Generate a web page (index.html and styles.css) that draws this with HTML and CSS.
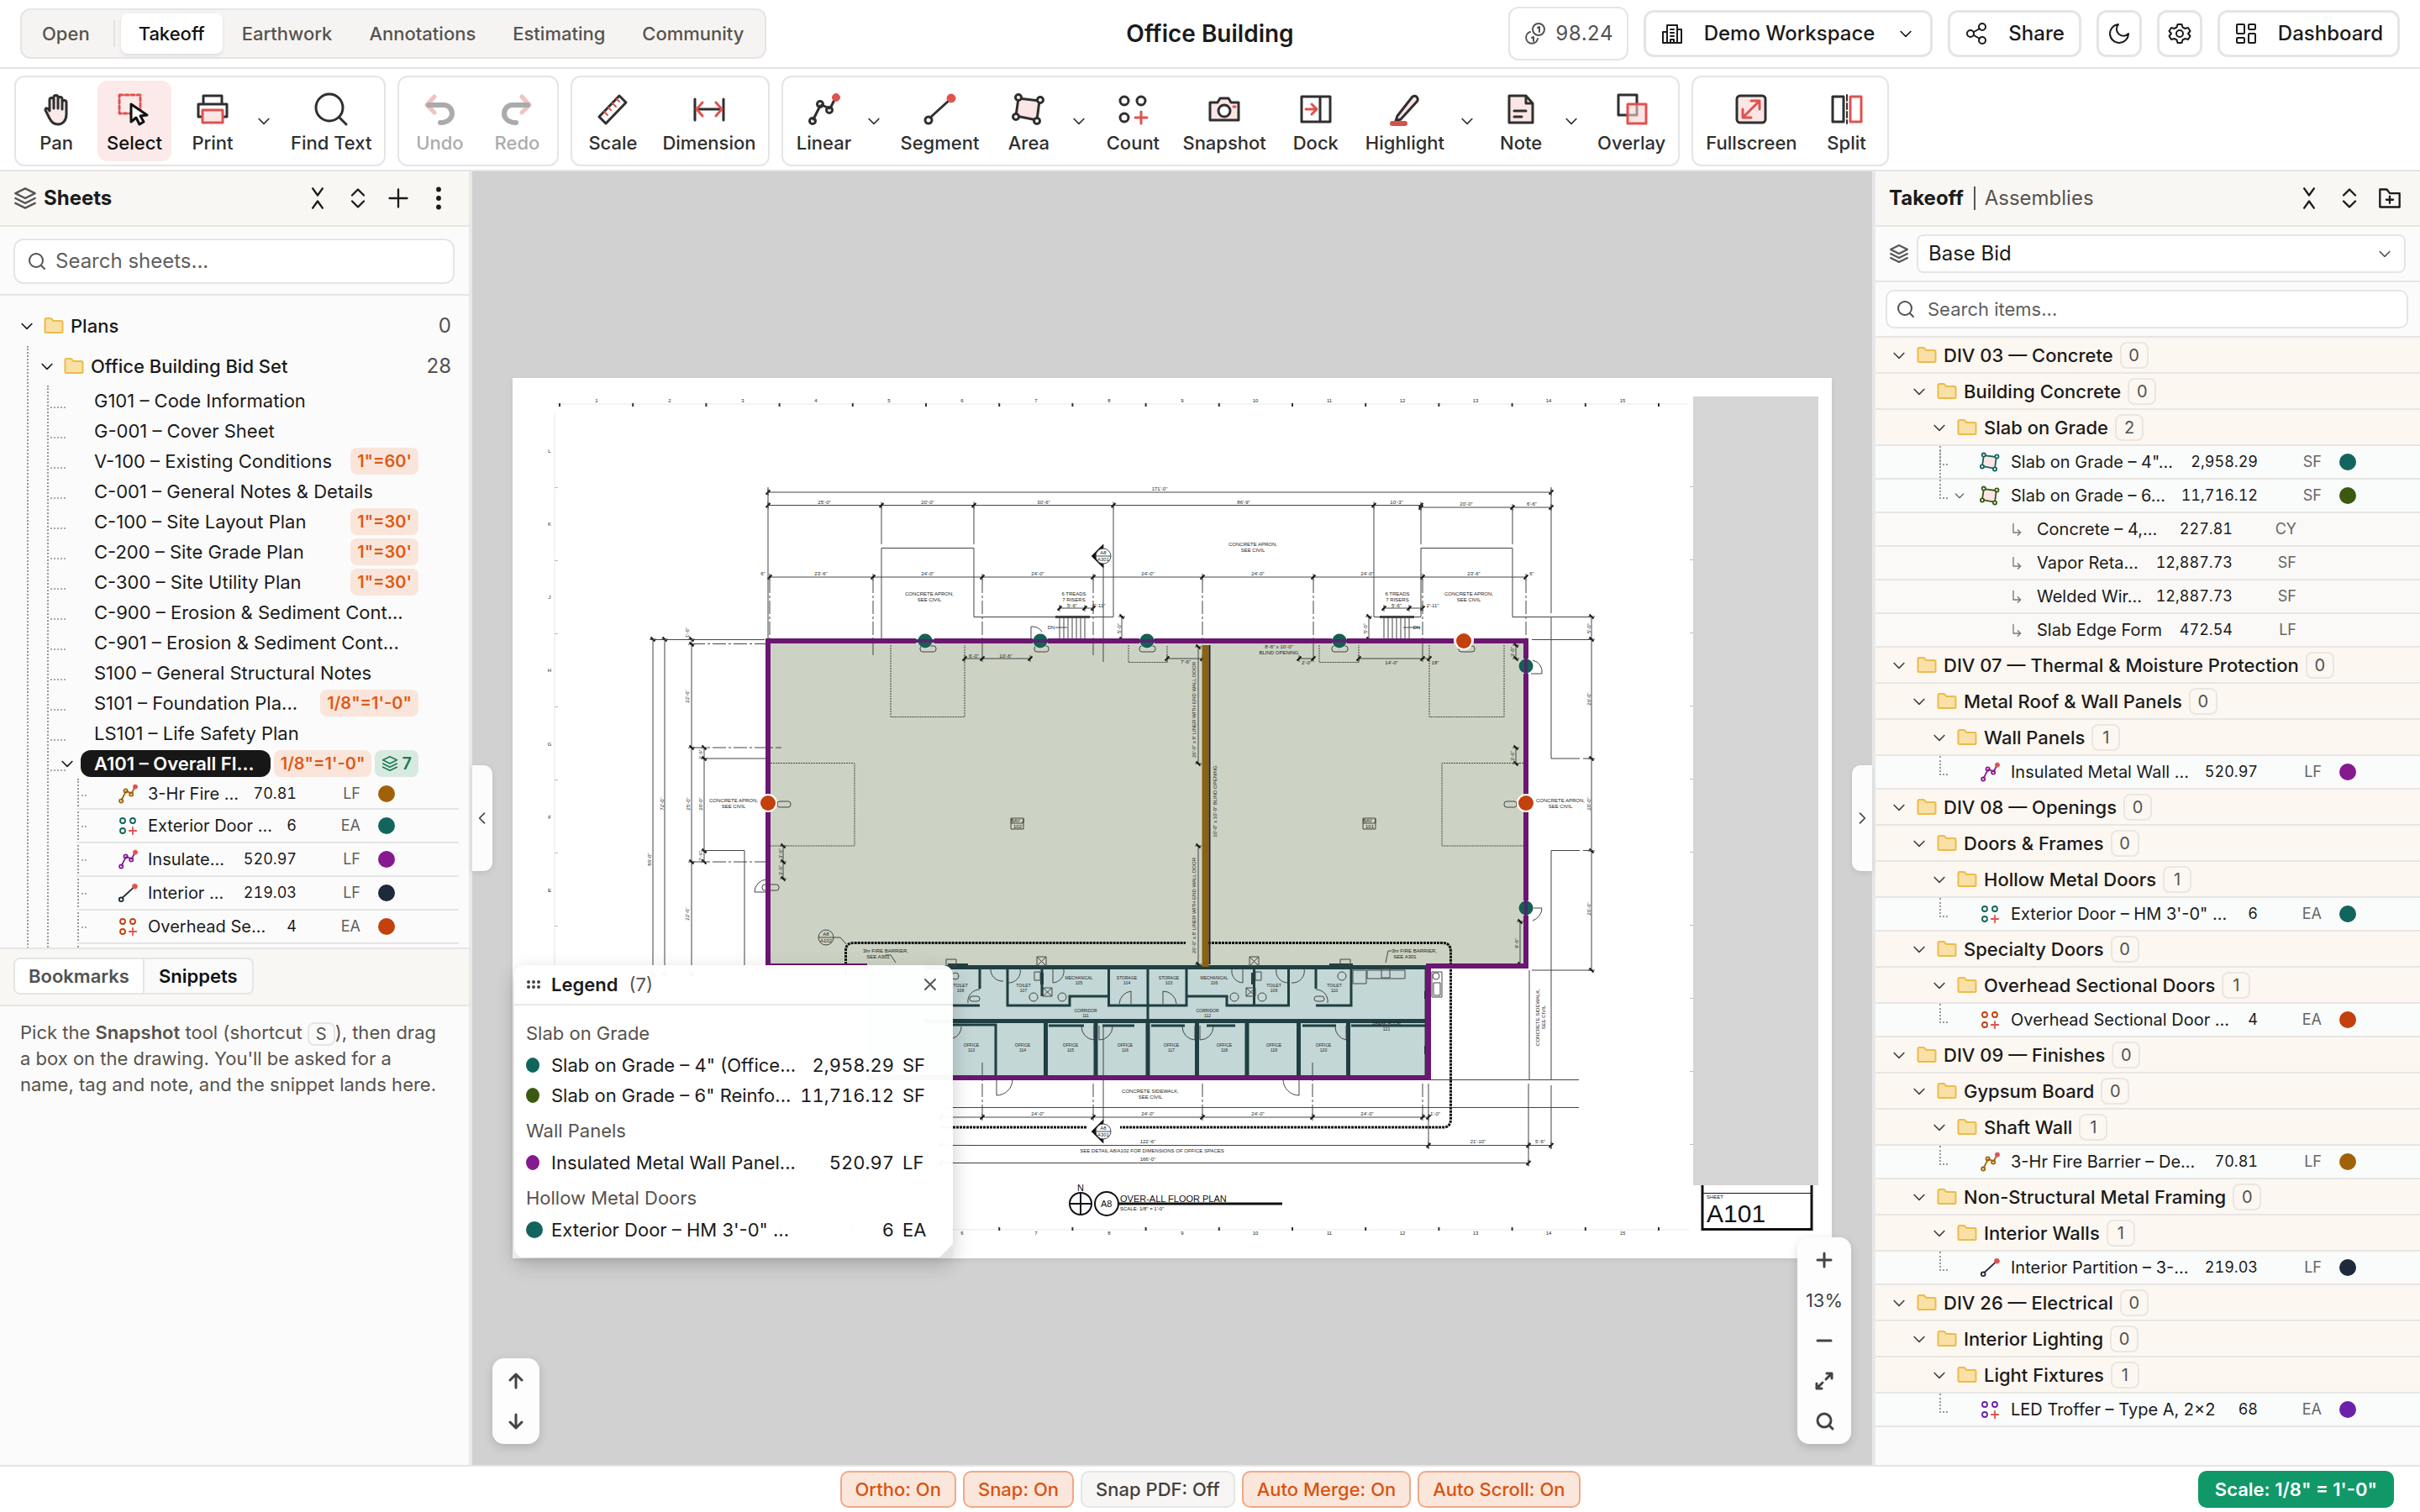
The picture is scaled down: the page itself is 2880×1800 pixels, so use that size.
FILE: index.html
```html
<!DOCTYPE html>
<html lang="en">
<head>
<meta charset="utf-8">
<title>Office Building – Takeoff</title>
<link rel="stylesheet" href="styles.css">
</head>
<body>
<svg class="defs" aria-hidden="true">
  <symbol id="chev" viewBox="0 0 24 24"><path d="m5 9 7 7 7-7"/></symbol>
  <symbol id="left" viewBox="0 0 24 24"><path d="m15 5-7 7 7 7"/></symbol>
  <symbol id="right" viewBox="0 0 24 24"><path d="m9 5 7 7-7 7"/></symbol>
  <symbol id="folder" viewBox="0 0 24 24"><path fill="#f9e0a6" stroke="#ecbb4a" d="M21 20H3a1.500 1.500 0 0 1-1.500-1.500V4.500A1.500 1.500 0 0 1 3 3h5.500l3 3H21a1.500 1.500 0 0 1 1.500 1.500v11A1.500 1.500 0 0 1 21 20Z"/></symbol>
  <symbol id="layers" viewBox="0 0 24 24"><path d="m12 2 10 5-10 5L2 7Z M2 12l10 5 10-5 M2 17l10 5 10-5"/></symbol>
  <symbol id="search" viewBox="0 0 24 24"><circle cx="11" cy="11" r="8"/><path d="m21 21-4-4"/></symbol>
  <symbol id="collapse" viewBox="0 0 24 24"><path d="m7 22 5-7 5 7M7 2l5 7 5-7"/></symbol>
  <symbol id="expand" viewBox="0 0 24 24"><path d="m6 15 6 6 6-6M6 9l6-6 6 6"/></symbol>
  <symbol id="plus" viewBox="0 0 24 24"><path d="M3 12h18M12 3v18"/></symbol>
  <symbol id="dots" viewBox="0 0 24 24"><g fill="currentColor"><circle cx="12" cy="3" r="1.500"/><circle cx="12" cy="12" r="1.500"/><circle cx="12" cy="21" r="1.500"/></g></symbol>
  <symbol id="folderplus" viewBox="0 0 24 24"><path d="M12 10v7M8.500 13.500h7M22 21H2V3h7l3 4h10Z"/></symbol>
  <symbol id="sub" viewBox="0 0 24 24"><path d="M6 2v16h13M14 13l5 5-5 5"/></symbol>
  <symbol id="linear" viewBox="0 0 40 40"><path d="M8 32 16 16M18 15l9 4M29 17l5-10"/><circle cx="7" cy="34" r="3.500"/><circle cx="16" cy="14" r="3.500"/><circle cx="27" cy="21" r="3.500"/><circle cx="35" cy="6" r="4.500" fill="#e0524f" stroke="#e0524f" stroke-width="1"/></symbol>
  <symbol id="segment" viewBox="0 0 40 40"><path d="M9 30 32 9"/><circle cx="7" cy="33" r="4"/><circle cx="34" cy="7" r="5" fill="#e0524f" stroke="#e0524f" stroke-width="1"/></symbol>
  <symbol id="area" viewBox="0 0 40 40"><path fill="#fbe6e5" d="M8 7 33 10 30 33 5 28Z"/><g fill="#fff"><circle cx="8" cy="6" r="3.500"/><circle cx="34" cy="9" r="3.500"/><circle cx="30" cy="34" r="3.500"/><circle cx="5" cy="29" r="3.500"/></g></symbol>
  <symbol id="count" viewBox="0 0 40 40"><circle cx="10" cy="10" r="5"/><circle cx="30" cy="10" r="5"/><circle cx="10" cy="30" r="5"/><path stroke="#e0524f" d="M30 23v14M23 30h14"/></symbol>
</svg>

<header class="topbar">
  <nav class="tabs">
    <button>Open</button><i class="tabsep"></i><button class="on">Takeoff</button><button>Earthwork</button><button>Annotations</button><button>Estimating</button><button>Community</button>
  </nav>
  <h1>Office Building</h1>
  <div class="actions">
    <span class="coins"><svg class="i"><g><circle cx="18" cy="9" r="7"/><path d="M8 12a7 7 0 1 0 9 8M17 7l2-1v6M10 19l2-1v5"/></g></svg>98.24</span>
    <button class="tb"><svg class="i"><path d="M8 25V4h12v21ZM8 12H3v13h5M20 9h5v16h-5M12 9h4M12 13h4M12 17h4M12 25v-4h4v4"/></svg>Demo Workspace<svg class="s"><use href="#chev"/></svg></button>
    <button class="tb"><svg class="i"><circle cx="21" cy="6" r="4"/><circle cx="7" cy="14" r="4"/><circle cx="21" cy="22" r="4"/><path d="m11 16 7 4M18 8l-7 4"/></svg>Share</button>
    <button class="tb sq" aria-label="Dark mode"><svg class="i"><path d="M13 3a8 8 0 0 0 12 11A11 11 0 1 1 13 3Z"/></svg></button>
    <button class="tb sq" aria-label="Settings"><svg class="i"><circle cx="14" cy="14" r="4"/><path d="M11.500 3h5l1 3.500 3 1.500 3.500-1 2.500 4-2.500 3 2.500 3-2.500 4-3.500-1-3 1.500-1 3.500h-5l-1-3.500-3-1.500-3.500 1-2.500-4L4 14l-2.500-3L4 7l3.500 1 3-1.500Z"/></svg></button>
    <button class="tb"><svg class="i"><rect x="3" y="3" width="9" height="11" rx="1"/><rect x="17" y="3" width="8" height="6" rx="1"/><rect x="17" y="14" width="8" height="11" rx="1"/><rect x="3" y="19" width="9" height="6" rx="1"/></svg>Dashboard</button>
  </div>
</header>

<div class="toolbar">
  <div class="group">
    <button><svg class="t"><path fill="#fbeae9" d="M12 22V9a2.500 2.500 0 0 1 5 0v-3a2.500 2.500 0 0 1 5 0v2a2.500 2.500 0 0 1 5 0v4a2.500 2.500 0 0 1 5 0v14c0 7-4 12-10 12-5 0-8-3-10-7l-5-10c0-3 3-3 5 1ZM17 9v10M22 7v12M27 11v9"/></svg>Pan</button>
    <button class="on"><svg class="t"><path stroke="#e0524f" stroke-dasharray="4 3" d="M2 3h25v22H2Z"/><path fill="#fff" d="M16 14v21l6-5 4 8 5-3-4-7 8-1Z"/></svg>Select</button>
    <button><svg class="t"><path d="M9 14V4h22v10M9 29H3V14h34v15h-6"/><path fill="#fbe6e5" stroke="#e0524f" d="M8 21h24v15H8Z"/></svg>Print</button>
    <button class="more" aria-label="Print options"><svg class="s"><use href="#chev"/></svg></button>
    <button><svg class="t"><circle cx="18" cy="18" r="16"/><path d="m30 30 8 8"/></svg>Find Text</button>
  </div>
  <div class="group off">
    <button disabled><svg class="t"><path stroke="#dc6a66" stroke-width="5" d="M14 5 5 15l9 9"/><path stroke-width="6" d="M7 15h18c6 0 10 5 10 10s-4 11-14 11"/></svg>Undo</button>
    <button disabled><svg class="t"><path stroke="#dc6a66" stroke-width="5" d="m26 5 9 10-9 9"/><path stroke-width="6" d="M33 15H15C9 15 5 20 5 25s4 11 14 11"/></svg>Redo</button>
  </div>
  <div class="group">
    <button><svg class="t"><path d="M4 29 28 4l8 8-24 25Z"/><path stroke="#e0524f" stroke-width="2" d="m10 23 4 4M15 18l3 3M20 13l4 4M25 8l3 3"/></svg>Scale</button>
    <button><svg class="t"><path d="M3 8v25M37 8v25M6 20h28"/><path stroke="#e0524f" d="m12 12-7 8 7 8M28 12l7 8-7 8"/></svg>Dimension</button>
  </div>
  <div class="group">
    <button><svg class="t"><use href="#linear"/></svg>Linear</button>
    <button class="more" aria-label="Linear options"><svg class="s"><use href="#chev"/></svg></button>
    <button><svg class="t"><use href="#segment"/></svg>Segment</button>
    <button><svg class="t"><use href="#area"/></svg>Area</button>
    <button class="more" aria-label="Area options"><svg class="s"><use href="#chev"/></svg></button>
    <button><svg class="t"><use href="#count"/></svg>Count</button>
    <button><svg class="t"><path fill="#fbe6e5" d="M3 12h9l3-5h10l3 5h9v21H3Z"/><circle fill="#fff" cx="20" cy="22" r="7"/><path stroke="#e0524f" d="M31 17h2"/></svg>Snapshot</button>
    <button><svg class="t"><path d="M3 5h34v30H3ZM25 5v30"/><path stroke="#e0524f" d="M8 20h12M15 14l6 6-6 6"/></svg>Dock</button>
    <button><svg class="t"><path fill="#fbe6e5" d="M11 28 29 5c4-2 7 1 6 5L15 32l-6 2Z"/><path stroke="#d8504d" stroke-width="6" d="M5 37h15"/></svg>Highlight</button>
    <button class="more" aria-label="Highlight options"><svg class="s"><use href="#chev"/></svg></button>
    <button><svg class="t"><path fill="#fbe6e5" d="M6 4h20l8 9v23H6ZM26 4v9h8M12 22h14M12 29h9"/></svg>Note</button>
    <button class="more" aria-label="Note options"><svg class="s"><use href="#chev"/></svg></button>
    <button><svg class="t"><path d="M4 3h22v24H4Z"/><path fill="#f8d4d2" fill-opacity=".6" stroke="#e0524f" d="M15 14h22v23H15Z"/></svg>Overlay</button>
  </div>
  <div class="group">
    <button><svg class="t"><rect x="3" y="4" width="34" height="32" rx="4" fill="#fbe6e5"/><path stroke="#e0524f" d="M11 29 29 11M20 10h10v10M10 20v10h10"/></svg>Fullscreen</button>
    <button><svg class="t"><path d="M3 5h13v30H3Z"/><path stroke-width="2" stroke-dasharray="7 3" d="M20 3v34"/><path stroke="#e0524f" d="M24 5h13v30H24Z"/></svg>Split</button>
  </div>
</div>

<main class="work">
<aside class="panel sheets">
  <div class="phead"><svg class="i"><use href="#layers"/></svg><h2>Sheets</h2>
    <button aria-label="Collapse all"><svg class="i"><use href="#collapse"/></svg></button><button aria-label="Expand all"><svg class="i"><use href="#expand"/></svg></button><button aria-label="Add"><svg class="i"><use href="#plus"/></svg></button><button aria-label="More"><svg class="i"><use href="#dots"/></svg></button></div>
  <div class="find"><label class="field big"><svg class="i"><use href="#search"/></svg><input type="text" placeholder="Search sheets..." aria-label="Search sheets"></label></div>
  <div class="tree">
    <div class="fold"><svg class="s"><use href="#chev"/></svg><svg class="f"><use href="#folder"/></svg><span>Plans</span><b>0</b></div>
    <div class="kids">
      <div class="fold"><svg class="s"><use href="#chev"/></svg><svg class="f"><use href="#folder"/></svg><span>Office Building Bid Set</span><b>28</b></div>
      <ul class="kids">
        <li><span>G101 – Code Information</span></li>
        <li><span>G-001 – Cover Sheet</span></li>
        <li><span>V-100 – Existing Conditions</span><em>1"=60'</em></li>
        <li><span>C-001 – General Notes &amp; Details</span></li>
        <li><span>C-100 – Site Layout Plan</span><em>1"=30'</em></li>
        <li><span>C-200 – Site Grade Plan</span><em>1"=30'</em></li>
        <li><span>C-300 – Site Utility Plan</span><em>1"=30'</em></li>
        <li><span>C-900 – Erosion &amp; Sediment Cont...</span></li>
        <li><span>C-901 – Erosion &amp; Sediment Cont...</span></li>
        <li><span>S100 – General Structural Notes</span></li>
        <li><span>S101 – Foundation Pla...</span><em>1/8"=1'-0"</em></li>
        <li><span>LS101 – Life Safety Plan</span></li>
        <li class="cur"><svg class="s"><use href="#chev"/></svg><span>A101 – Overall Fl...</span><em>1/8"=1'-0"</em><em class="green"><svg class="s"><use href="#layers"/></svg>7</em></li>
        <li class="sub">
          <ul class="uses">
            <li><svg class="k ochre"><use href="#linear"/></svg><span>3-Hr Fire ...</span><b>70.81</b><small>LF</small><i class="ochre"></i></li>
            <li><svg class="k teal"><use href="#count"/></svg><span>Exterior Door ...</span><b>6</b><small>EA</small><i class="teal"></i></li>
            <li><svg class="k purple"><use href="#linear"/></svg><span>Insulate...</span><b>520.97</b><small>LF</small><i class="purple"></i></li>
            <li><svg class="k navy"><use href="#segment"/></svg><span>Interior ...</span><b>219.03</b><small>LF</small><i class="navy"></i></li>
            <li><svg class="k orange"><use href="#count"/></svg><span>Overhead Se...</span><b>4</b><small>EA</small><i class="orange"></i></li>
          </ul>
        </li>
      </ul>
    </div>
  </div>
  <section class="lower">
    <div class="lhead"><div class="seg"><button>Bookmarks</button><button class="on">Snippets</button></div></div>
    <p>Pick the <strong>Snapshot</strong> tool (shortcut <kbd>S</kbd>), then drag a box on the drawing. You'll be asked for a name, tag and note, and the snippet lands here.</p>
  </section>
</aside>

<section class="canvas">
  <svg class="plan" viewBox="610 450 1570 1048" role="img" aria-label="Overall floor plan">
    <defs>
      <marker id="tk" viewBox="-5 -5 10 10" markerWidth="10" markerHeight="10" markerUnits="userSpaceOnUse" orient="auto"><path d="M0-4V4" stroke="#444" stroke-width="1"/><path d="M-2.500 2.500 2.500-2.500" stroke="#111" stroke-width="1.800"/></marker>
      <g id="mk"><circle r="9" fill="#f6ebe2"/><circle r="8.500" fill="#175e58"/></g>
      <g id="mo"><circle r="11" fill="#fff"/><circle r="9" fill="#c2410c"/></g>
      <g id="bubble"><path fill="#111" d="M0-14-14 0 0 14Z"/><circle r="9" fill="#fff"/><path d="M-9 0H9"/></g>
    </defs>
    <path fill="#fff" d="M610 450h1570v1048H610Z"/>
    <path fill="#d5d5d5" d="M2015 472h149v939h-149Z"/>
    <g stroke="#e8e8e8"><path d="M662 481H2008M1134 1464H2010M660 492V1460"/></g>
    <g stroke="#333" stroke-width="4" fill="none"><path stroke-dasharray="2 85.200" d="M665 482H2010M665 1463H2010"/><path stroke="#bbb" stroke-dasharray="1 86" d="M662 580V1150M2013 579V1410"/></g>
    <g class="tx"><text x="710" y="479">1</text><text x="797" y="479">2</text><text x="884" y="479">3</text><text x="971" y="479">4</text><text x="1058" y="479">5</text><text x="1145" y="479">6</text><text x="1233" y="479">7</text><text x="1320" y="479">8</text><text x="1407" y="479">9</text><text x="1494" y="479">10</text><text x="1582" y="479">11</text><text x="1669" y="479">12</text><text x="1756" y="479">13</text><text x="1843" y="479">14</text><text x="1931" y="479">15</text>
      <text x="1145" y="1470">6</text><text x="1233" y="1470">7</text><text x="1320" y="1470">8</text><text x="1407" y="1470">9</text><text x="1494" y="1470">10</text><text x="1582" y="1470">11</text><text x="1669" y="1470">12</text><text x="1756" y="1470">13</text><text x="1843" y="1470">14</text><text x="1931" y="1470">15</text>
      <text x="654" y="539">L</text><text x="654" y="626">K</text><text x="654" y="713">J</text><text x="654" y="800">H</text><text x="654" y="888">G</text><text x="654" y="975">F</text><text x="654" y="1062">E</text></g>
    <path fill="#ccd3c4" d="M914 763h902v387H914Z"/>
    <path fill="#c3d7d6" d="M1032 1150h668v133h-668Z"/>

    <g class="ln dim">
      <path d="M914 586H1846"/>
      <path d="M914 601.500H1049H1159H1325H1635H1691"/><path d="M1691 604H1800H1846"/>
      <path d="M916 687H1039H1169H1301H1431H1563H1693H1816"/>
      <path d="M777 761V1160"/><path d="M791 761V1160"/><path d="M823 761V767V890V1026V1160"/><path d="M838 890V903V1013V1026"/>
      <path d="M1894 734V761V903V1013V1155"/>
      <path d="M1261 724H1291H1301"/><path d="M1647 724H1677H1693"/><path d="M1335 734V761"/><path d="M1629 734V761"/>
      <path d="M1148 784H1169H1226"/><path d="M1389 784H1431"/><path d="M1546 784H1563"/><path d="M1617 784H1693H1701"/>
      <path d="M1426 770V909"/><path d="M1426 1007V1148"/><path d="M932 1007V1026V1046"/><path d="M1804 768V784"/><path d="M1804 890V909"/><path d="M1809 1097V1148"/>
      <path d="M1120 1330H1169H1301H1431H1562H1693H1700"/><path d="M1120 1363.500H1700H1819H1846"/><path d="M1120 1384.500H1819"/>
    </g>
    <g class="ln">
      <path d="M914 580V760M1049 601V648M1049 760V652.500H1159V734.500H1325V601M1159 601V648"/>
      <path d="M1635 601V734.500H1691M1691 601V648M1691 734V652.500H1800V734.500H1896M1800 604V648M1846 580V730M1846 735V903H1880M1884 903H1896M1846 1090V1012.500H1880M1884 1012.500H1896M1846 1090V1285M1846 1292V1368"/>
      <path d="M774 761.500H910M838 903H912M838 1012.500H886V1150M1823 761.500H1894M1823 1155H1894M1820 1155V1285M1819 1290V1388M1700 1290V1368"/>
      <path stroke-dasharray="16 3 3 3" d="M916 690V764M1039 690V780M1169 690V780M1301 690V780M1431 690V764M1563 690V780M1693 690V780M1816 690V764M823 766.500H914M823 890H930M823 1026H914M1169 1265V1328M1301 1290V1328M1431 1290V1328M1562 1265V1328M1693 1290V1328"/>
      <path stroke-dasharray="2 1" d="M1060 768V853.500H1148V768M917 908.500H1017V1007H917M1701 768V853.500H1790V768M1816 908.500H1716V1007H1816M1343 768V788.500H1389V768M1570 768V788.500H1617V768"/>
      <path d="M1261 734V762M1266 734V762M1271 734V762M1276 734V762M1281 734V762M1286 734V762M1291 734V762M1647 734V762M1652 734V762M1657 734V762M1662 734V762M1667 734V762M1672 734V762M1677 734V762M1256 747h14M1690 747h-20"/>
      <path stroke-width="3" d="M1256 734.500H1297M1642 734.500H1683"/>
      <path d="M898 1062H914M898 1062A15 15 0 0 1 912 1047M1835 802H1822M1835 802A14 14 0 0 0 1824 786M1835 1081H1822M1835 1081A16 16 0 0 1 1824 1096M1227 762V746A14 14 0 0 1 1240 752"/>
      <path d="M1700 1285.500H1879M1120 1318.500H1879M1313 672V788M1313 1220V1336"/>
      <path d="M1186 1285V1304A19 19 0 0 0 1205 1285M1546 1285V1304A19 19 0 0 1 1527 1285M992 1116H1000L1007 1124M1066 1146 1060 1137H1054M1649 1146 1652 1132H1656"/>
      <rect x="1095" y="769" width="19" height="7" rx="3"/><rect x="1231" y="769" width="17" height="7" rx="3"/><rect x="1356" y="769" width="19" height="7" rx="3"/><rect x="1585" y="769" width="19" height="7" rx="3"/><rect x="1736" y="769" width="19" height="7" rx="3"/><rect x="925" y="954" width="16" height="7" rx="3"/><rect x="1790" y="954" width="15" height="7" rx="3"/><rect x="907" y="1053" width="20" height="7" rx="3"/>
      <path d="M1203 974h15v13h-15ZM1203 980h15M1622 974h15v13h-15ZM1622 980h15"/>
      <circle cx="983" cy="1116" r="9"/><path d="M974 1116H992"/>
    </g>
    <g class="tx">
      <text x="1380" y="584">171'-0"</text><text x="981" y="600">25'-0"</text><text x="1104" y="600">20'-0"</text><text x="1242" y="600">30'-6"</text><text x="1480" y="600">86'-9"</text><text x="1662" y="600">10'-3"</text><text x="1745" y="602">20'-0"</text><text x="1823" y="602">6'-6"</text>
      <text x="908" y="685">6"</text><text x="977" y="685">23'-6"</text><text x="1104" y="685">24'-0"</text><text x="1235" y="685">24'-0"</text><text x="1366" y="685">24'-0"</text><text x="1497" y="685">24'-0"</text><text x="1627" y="685">24'-0"</text><text x="1754" y="685">23'-6"</text><text x="1823" y="685">6"</text>
      <text x="1106" y="709">CONCRETE APRON,</text><text x="1106" y="716">SEE CIVIL</text><text x="1491" y="650">CONCRETE APRON,</text><text x="1491" y="657">SEE CIVIL</text><text x="1748" y="709">CONCRETE APRON,</text><text x="1748" y="716">SEE CIVIL</text><text x="873" y="955">CONCRETE APRON,</text><text x="873" y="962">SEE CIVIL</text><text x="1857" y="955">CONCRETE APRON,</text><text x="1857" y="962">SEE CIVIL</text>
      <text x="1278" y="709">6 TREADS</text><text x="1278" y="716">7 RISERS</text><text x="1663" y="709">6 TREADS</text><text x="1663" y="716">7 RISERS</text><text x="1276" y="723">5'-6"</text><text x="1308" y="723">2'-11"</text><text x="1662" y="723">5'-6"</text><text x="1705" y="723">2'-11"</text><text x="1251" y="749">DN</text><text x="1686" y="749">DN</text>
      <text x="1159" y="783">6'-0"</text><text x="1197" y="783">10'-6"</text><text x="1411" y="790">7'-6"</text><text x="1555" y="791">2'-0"</text><text x="1656" y="791">14'-0"</text><text x="1708" y="791">18"</text><text x="1522" y="772">8'-6" x 10'-0"</text><text x="1522" y="779">BLIND OPENING</text>
      <text x="1054" y="1134">3hr FIRE BARRIER,</text><text x="1045" y="1141">SEE A301</text><text x="1683" y="1134">3hr FIRE BARRIER,</text><text x="1672" y="1141">SEE A301</text>
      <text x="1211" y="979">BAY 2</text><text x="1630" y="979">BAY 1</text><text x="1211" y="986">102</text><text x="1630" y="986">101</text>
      <text x="983" y="1114">A8</text><text x="983" y="1122">A102</text>
      <text x="1235" y="1328">24'-0"</text><text x="1366" y="1328">24'-0"</text><text x="1497" y="1328">24'-0"</text><text x="1627" y="1328">24'-0"</text><text x="1708" y="1328">1'-0"</text><text x="1366" y="1361">122'-6"</text><text x="1759" y="1361">21'-10"</text><text x="1833" y="1361">5'-6"</text><text x="1366" y="1382">166'-0"</text><text x="1371" y="1372">SEE DETAIL A8/A102 FOR DIMENSIONS OF OFFICE SPACES</text><text x="1369" y="1301">CONCRETE SIDEWALK,</text><text x="1369" y="1308">SEE CIVIL</text>
      <g transform="rotate(-90)"><text x="-753" y="820">1'-6"</text><text x="-829" y="820">22'-6"</text><text x="-898" y="836">2'-6"</text><text x="-957" y="790">72'-0"</text><text x="-957" y="821">25'-0"</text><text x="-957" y="836">20'-0"</text><text x="-1019" y="836">2'-6"</text><text x="-1023" y="775">86'-0"</text><text x="-1088" y="820">22'-6"</text><text x="-748" y="1334">5'-0"</text><text x="-748" y="1627">5'-0"</text><text x="-748" y="1893">5'-0"</text><text x="-832" y="1893">26'-0"</text><text x="-957" y="1893">20'-0"</text><text x="-1082" y="1893">26'-6"</text><text x="-776" y="1802">3'-0"</text><text x="-900" y="1802">3'-6"</text><text x="-1123" y="1807">9'-6"</text><text x="-1016" y="931">3'-6"</text><text x="-1036" y="931">3'-6"</text><text x="-845" y="1423">26'-6" x 8' LINER WITH END WALL DOOR</text><text x="-1078" y="1423">26'-6" x 8' LINER WITH END WALL DOOR</text><text x="-954" y="1448">10'-0" x 10'-0" BLIND OPENING</text><text x="-1211" y="1832">CONCRETE SIDEWALK,</text><text x="-1211" y="1839">SEE CIVIL</text></g>
    </g>
    <g class="dots"><path d="M1006.500 1160V1131Q1007 1122.500 1016 1122.500H1411M1438 1122.500H1718Q1726 1123 1726.500 1132V1333Q1726 1342 1718 1342H1333M1293 1342H1120"/></g>

    <g class="wall">
      <path stroke-width="5" d="M1100 1151.500H1700"/><path stroke="#8fb0ae" stroke-width="2" stroke-dasharray="14 8" d="M1128 1152H1696"/>
      <path stroke-width="3" d="M1166 1153V1177M1199 1153V1197H1273V1186H1319M1240 1153V1186M1319.500 1153V1197H1412V1153M1366 1153V1216M1412 1186H1460V1197H1533.500V1153M1492.500 1153V1197M1566 1153V1177M1566 1197H1608V1153M1134 1197H1166M1697 1153V1280"/>
      <path stroke="#12394a" stroke-width="5" d="M1100 1215.500H1700M1244.500 1216V1280M1304 1216V1280M1366 1216V1280M1424.500 1216V1280M1484 1216V1280M1545.500 1216V1280M1604.500 1216V1280"/>
      <path stroke-width="3" d="M1134 1220H1185V1280M1248 1221H1290M1312 1221H1350M1370 1221H1410M1436 1221H1470M1550 1221H1590M1608 1221H1696"/>
      <path stroke="#111" stroke-width="4" d="M1128 1149H1152M1582 1149H1610M1697 1180V1189M1697 1245V1255M1240 1158V1172M1491 1158V1172"/>
    </g>
    <g class="ln">
      <path d="M1179 1153A14 14 0 0 0 1194 1168M1214 1153A14 14 0 0 1 1199 1170M1253 1153V1170A14 14 0 0 0 1266 1154M1479 1153V1170A14 14 0 0 1 1466 1154M1519 1153A14 14 0 0 0 1533 1170M1552 1153A14 14 0 0 1 1537 1170M1346 1195V1180A16 16 0 0 0 1332 1195M1384 1195V1180A16 16 0 0 1 1400 1195M1152 1194A14 14 0 0 1 1166 1178M1580 1194A14 14 0 0 0 1566 1178M1302 1221V1238A16 16 0 0 1 1287 1222M1308 1221V1238A16 16 0 0 0 1324 1222M1422 1221V1238A16 16 0 0 1 1407 1222M1428 1221V1238A16 16 0 0 0 1444 1222M1602 1221V1238A16 16 0 0 1 1589 1222M1134 1236A14 14 0 0 0 1144 1222"/>
      <path d="M1234 1139h11v11h-11ZM1234 1139l11 11M1245 1139l-11 11M1487 1139h11v11h-11ZM1487 1139l11 11M1498 1139l-11 11M1126 1142h12v8h-12ZM1595 1142h12v8h-12ZM1241 1176h11v10h-11ZM1241 1176l11 10M1252 1176l-11 10M1483 1176h11v10h-11ZM1483 1176l11 10M1494 1176l-11 10M1610 1155h16v16h-16ZM1627 1155h45v10h-45ZM1644 1153h10v11h-10ZM1704 1157h12v30h-12ZM1706 1170h8v15h-8ZM1231 1157h7v10h-7ZM1494 1157h7v10h-7Z"/>
      <circle cx="1230" cy="1187" r="5"/><circle cx="1264" cy="1187" r="5"/><circle cx="1469" cy="1187" r="5"/><circle cx="1502" cy="1187" r="5"/><circle cx="1597" cy="1162" r="5"/><circle cx="1137" cy="1162" r="4"/><circle cx="1709" cy="1162" r="4"/>
      <rect x="1154" y="1186" width="12" height="6" rx="3"/><rect x="1564" y="1186" width="12" height="6" rx="3"/>
    </g>
    <g class="tx rm">
      <text x="1143" y="1175">TOILET</text><text x="1143" y="1181">108</text><text x="1218" y="1175">TOILET</text><text x="1218" y="1181">107</text><text x="1284" y="1166">MECHANICAL</text><text x="1284" y="1172">105</text><text x="1341" y="1166">STORAGE</text><text x="1341" y="1172">104</text><text x="1391" y="1166">STORAGE</text><text x="1391" y="1172">103</text><text x="1445" y="1166">MECHANICAL</text><text x="1445" y="1172">106</text><text x="1516" y="1175">TOILET</text><text x="1516" y="1181">109</text><text x="1588" y="1175">TOILET</text><text x="1588" y="1181">110</text>
      <text x="1292" y="1205">CORRIDOR</text><text x="1292" y="1211">111</text><text x="1437" y="1205">CORRIDOR</text><text x="1437" y="1211">112</text><text x="1650" y="1220">BREAK ROOM</text><text x="1650" y="1227">121</text>
      <text x="1156" y="1246">OFFICE</text><text x="1156" y="1252">113</text><text x="1217" y="1246">OFFICE</text><text x="1217" y="1252">114</text><text x="1274" y="1246">OFFICE</text><text x="1274" y="1252">115</text><text x="1339" y="1246">OFFICE</text><text x="1339" y="1252">116</text><text x="1394" y="1246">OFFICE</text><text x="1394" y="1252">117</text><text x="1457" y="1246">OFFICE</text><text x="1457" y="1252">118</text><text x="1516" y="1246">OFFICE</text><text x="1516" y="1252">119</text><text x="1575" y="1246">OFFICE</text><text x="1575" y="1252">120</text>
    </g>

    <path stroke="#8a6214" stroke-width="8" d="M1434.500 768V1151"/><path stroke="#222" stroke-width="2" d="M1439.500 768V1148"/>
    <use href="#mk" x="1101" y="763"/><use href="#mk" x="1238" y="763"/><use href="#mk" x="1365" y="763"/><use href="#mk" x="1594" y="763"/><use href="#mo" x="1742" y="763"/><use href="#mk" x="1816" y="793"/><use href="#mk" x="1816" y="1081"/>
    <path fill="none" stroke="#6b1670" stroke-width="6" d="M1032 1150H914V763H1090M1112 763H1229M1247 763H1356M1374 763H1585M1603 763H1730M1754 763H1816V784M1816 802V1072M1816 1090V1150H1700V1283H1032"/>
    <path stroke="#4d2a68" stroke-width="4" d="M1090 763h22M1229 763h18M1356 763h18M1585 763h18M1816 784v18M1816 1072v18"/>
    <use href="#mo" x="914" y="956"/><use href="#mo" x="1816" y="956"/>
    <g class="ln"><use href="#bubble" x="1313" y="662"/><use href="#bubble" x="1313" y="1347"/></g>
    <g class="tx"><text x="1313" y="660">A8</text><text x="1313" y="668">A301</text><text x="1313" y="1345">A8</text><text x="1313" y="1353">A301</text></g>

    <g fill="none" stroke="#111"><circle cx="1286" cy="1433" r="13" stroke-width="2"/><path stroke-width="2" d="M1273 1433H1299M1286 1420V1446"/><circle cx="1317" cy="1433" r="14" stroke-width="2"/><path stroke-width="3" d="M1331 1433H1526"/><path stroke-width="3" d="M2026 1411V1463.500H2156V1411"/><path d="M2026 1420.500H2156"/></g>
    <g class="tt"><text x="1282" y="1418">N</text><text x="1310" y="1437">A8</text><text x="1333" y="1431">OVER-ALL FLOOR PLAN</text><text class="sm" x="1333" y="1441">SCALE: 1/8" = 1'-0"</text><text class="sm" x="2031" y="1427">SHEET</text><text class="no" x="2031" y="1455">A101</text></g>
  </svg>

  <div class="legend">
    <header><svg class="grip"><g fill="#444"><circle cx="2" cy="3" r="2"/><circle cx="8" cy="3" r="2"/><circle cx="14" cy="3" r="2"/><circle cx="2" cy="9" r="2"/><circle cx="8" cy="9" r="2"/><circle cx="14" cy="9" r="2"/></g></svg><h3>Legend</h3><span>(7)</span><button aria-label="Close legend"><svg class="x"><path d="m2 2 12 12M14 2 2 14"/></svg></button></header>
    <div class="lbody">
      <h4>Slab on Grade</h4>
      <p><i class="teal"></i><span>Slab on Grade – 4" (Office...</span><b>2,958.29</b><u>SF</u></p>
      <p><i class="olive"></i><span>Slab on Grade – 6" Reinfo...</span><b>11,716.12</b><u>SF</u></p>
      <h4>Wall Panels</h4>
      <p><i class="purple"></i><span>Insulated Metal Wall Panel...</span><b>520.97</b><u>LF</u></p>
      <h4>Hollow Metal Doors</h4>
      <p><i class="teal pt"></i><span>Exterior Door – HM 3'-0" ...</span><b>6</b><u>EA</u></p>
    </div>
    <svg class="corner"><path fill="#e3e3e3" d="M16 0v16H0Z"/></svg>
  </div>
  <button class="handle lh" aria-label="Hide sheets"><svg class="s"><use href="#left"/></svg></button>
  <button class="handle rh" aria-label="Hide takeoff"><svg class="s"><use href="#right"/></svg></button>
  <div class="float nav"><button aria-label="Previous sheet"><svg class="i"><path d="M14 22V6M7 13l7-7 7 7"/></svg></button><button aria-label="Next sheet"><svg class="i"><path d="M14 6v16M7 15l7 7 7-7"/></svg></button></div>
  <div class="float zoom"><button aria-label="Zoom in"><svg class="i"><path d="M6 14h16M14 6v16"/></svg></button><span>13%</span><button aria-label="Zoom out"><svg class="i"><path d="M6 14h16"/></svg></button><button aria-label="Fit"><svg class="i"><path d="M16 12l7-7M17 5h6v6M12 16l-7 7M5 17v6h6"/></svg></button><button aria-label="Find"><svg class="i"><circle cx="14" cy="13" r="8"/><path d="m20 19 4 4"/></svg></button></div>
</section>

<aside class="panel takeoff">
  <div class="phead"><h2>Takeoff</h2><i class="bar"></i><a href="#assemblies">Assemblies</a>
    <button aria-label="Collapse all"><svg class="i"><use href="#collapse"/></svg></button><button aria-label="Expand all"><svg class="i"><use href="#expand"/></svg></button><button aria-label="New folder"><svg class="i"><use href="#folderplus"/></svg></button></div>
  <div class="bid"><svg class="i"><use href="#layers"/></svg><div class="sel"><select aria-label="Bid"><option>Base Bid</option></select><svg class="s"><use href="#chev"/></svg></div></div>
  <div class="find2"><label class="field"><svg class="i"><use href="#search"/></svg><input type="text" placeholder="Search items..." aria-label="Search items"></label></div>
  <ul class="items">
    <li class="g"><svg class="s"><use href="#chev"/></svg><svg class="f"><use href="#folder"/></svg><span>DIV 03 — Concrete</span><b>0</b></li>
    <li class="g l1"><svg class="s"><use href="#chev"/></svg><svg class="f"><use href="#folder"/></svg><span>Building Concrete</span><b>0</b></li>
    <li class="g l2"><svg class="s"><use href="#chev"/></svg><svg class="f"><use href="#folder"/></svg><span>Slab on Grade</span><b>2</b></li>
    <li class="it thru"><svg class="k teal"><use href="#area"/></svg><span>Slab on Grade – 4"...</span><b>2,958.29</b><small>SF</small><i class="teal"></i></li>
    <li class="it op"><svg class="s"><use href="#chev"/></svg><svg class="k olive"><use href="#area"/></svg><span>Slab on Grade – 6...</span><b>11,716.12</b><small>SF</small><i class="olive"></i></li>
    <li class="su"><svg class="s"><use href="#sub"/></svg><span>Concrete – 4,...</span><b>227.81</b><small>CY</small></li>
    <li class="su"><svg class="s"><use href="#sub"/></svg><span>Vapor Reta...</span><b>12,887.73</b><small>SF</small></li>
    <li class="su"><svg class="s"><use href="#sub"/></svg><span>Welded Wir...</span><b>12,887.73</b><small>SF</small></li>
    <li class="su"><svg class="s"><use href="#sub"/></svg><span>Slab Edge Form</span><b>472.54</b><small>LF</small></li>
    <li class="g"><svg class="s"><use href="#chev"/></svg><svg class="f"><use href="#folder"/></svg><span>DIV 07 — Thermal &amp; Moisture Protection</span><b>0</b></li>
    <li class="g l1"><svg class="s"><use href="#chev"/></svg><svg class="f"><use href="#folder"/></svg><span>Metal Roof &amp; Wall Panels</span><b>0</b></li>
    <li class="g l2"><svg class="s"><use href="#chev"/></svg><svg class="f"><use href="#folder"/></svg><span>Wall Panels</span><b>1</b></li>
    <li class="it"><svg class="k purple"><use href="#linear"/></svg><span>Insulated Metal Wall ...</span><b>520.97</b><small>LF</small><i class="purple"></i></li>
    <li class="g"><svg class="s"><use href="#chev"/></svg><svg class="f"><use href="#folder"/></svg><span>DIV 08 — Openings</span><b>0</b></li>
    <li class="g l1"><svg class="s"><use href="#chev"/></svg><svg class="f"><use href="#folder"/></svg><span>Doors &amp; Frames</span><b>0</b></li>
    <li class="g l2"><svg class="s"><use href="#chev"/></svg><svg class="f"><use href="#folder"/></svg><span>Hollow Metal Doors</span><b>1</b></li>
    <li class="it"><svg class="k teal"><use href="#count"/></svg><span>Exterior Door – HM 3'-0" ...</span><b>6</b><small>EA</small><i class="teal"></i></li>
    <li class="g l1"><svg class="s"><use href="#chev"/></svg><svg class="f"><use href="#folder"/></svg><span>Specialty Doors</span><b>0</b></li>
    <li class="g l2"><svg class="s"><use href="#chev"/></svg><svg class="f"><use href="#folder"/></svg><span>Overhead Sectional Doors</span><b>1</b></li>
    <li class="it"><svg class="k orange"><use href="#count"/></svg><span>Overhead Sectional Door ...</span><b>4</b><small>EA</small><i class="orange"></i></li>
    <li class="g"><svg class="s"><use href="#chev"/></svg><svg class="f"><use href="#folder"/></svg><span>DIV 09 — Finishes</span><b>0</b></li>
    <li class="g l1"><svg class="s"><use href="#chev"/></svg><svg class="f"><use href="#folder"/></svg><span>Gypsum Board</span><b>0</b></li>
    <li class="g l2"><svg class="s"><use href="#chev"/></svg><svg class="f"><use href="#folder"/></svg><span>Shaft Wall</span><b>1</b></li>
    <li class="it"><svg class="k ochre"><use href="#linear"/></svg><span>3-Hr Fire Barrier – De...</span><b>70.81</b><small>LF</small><i class="ochre"></i></li>
    <li class="g l1"><svg class="s"><use href="#chev"/></svg><svg class="f"><use href="#folder"/></svg><span>Non-Structural Metal Framing</span><b>0</b></li>
    <li class="g l2"><svg class="s"><use href="#chev"/></svg><svg class="f"><use href="#folder"/></svg><span>Interior Walls</span><b>1</b></li>
    <li class="it"><svg class="k navy"><use href="#segment"/></svg><span>Interior Partition – 3-...</span><b>219.03</b><small>LF</small><i class="navy"></i></li>
    <li class="g"><svg class="s"><use href="#chev"/></svg><svg class="f"><use href="#folder"/></svg><span>DIV 26 — Electrical</span><b>0</b></li>
    <li class="g l1"><svg class="s"><use href="#chev"/></svg><svg class="f"><use href="#folder"/></svg><span>Interior Lighting</span><b>0</b></li>
    <li class="g l2"><svg class="s"><use href="#chev"/></svg><svg class="f"><use href="#folder"/></svg><span>Light Fixtures</span><b>1</b></li>
    <li class="it"><svg class="k violet"><use href="#count"/></svg><span>LED Troffer – Type A, 2×2</span><b>68</b><small>EA</small><i class="violet"></i></li>
  </ul>
</aside>
</main>

<footer class="status">
  <div class="toggles"><button class="on">Ortho: On</button><button class="on">Snap: On</button><button>Snap PDF: Off</button><button class="on">Auto Merge: On</button><button class="on">Auto Scroll: On</button></div>
  <button class="scale">Scale: 1/8" = 1'-0"</button>
</footer>
</body>
</html>
```
FILE: styles.css
```css
* { box-sizing: border-box; }
body {
  margin: 0;
  height: 100vh;
  display: grid;
  grid-template-rows: auto auto minmax(0, 1fr) auto;
  font: 22px/28px Inter, "Liberation Sans", sans-serif;
  color: #1b1b1b;
  background: #fff;
  overflow: hidden;
}
h1, h2, h3, h4, p, ul { margin: 0; padding: 0; }
ul { list-style: none; }
button, input, select { font: inherit; color: inherit; background: none; border: 0; padding: 0; margin: 0; }
b, em, i, u, small { font-style: normal; font-weight: 400; text-decoration: none; font-size: inherit; }
svg { flex: none; fill: none; stroke: currentColor; stroke-width: 2; stroke-linecap: round; stroke-linejoin: round; }
.defs { position: absolute; width: 0; height: 0; }
.i { width: 28px; height: 28px; }
.s { width: 20px; height: 20px; }
.f { width: 24px; height: 24px; }
.k { width: 24px; height: 24px; stroke-width: 3; }

.teal { color: #12655d; }
.olive { color: #3a5a12; }
.purple { color: #86198f; }
.ochre { color: #a16207; }
.navy { color: #1e293b; }
.orange { color: #c2410c; }
.violet { color: #6b21a8; }
i.teal, i.olive, i.purple, i.ochre, i.navy, i.orange, i.violet {
  width: 20px; height: 20px; border-radius: 50%; background: currentColor; flex: none;
}

/* top bar */
.topbar {
  display: grid;
  grid-template-columns: 1fr auto 1fr;
  align-items: center;
  height: 82px;
  padding: 0 24px;
  border-bottom: 2px solid #e5e5e5;
}
.tabs {
  justify-self: start;
  display: flex;
  align-items: center;
  gap: 2px;
  padding: 4px;
  border: 2px solid #e7e5e4;
  border-radius: 12px;
  background: #f6f4f2;
  font-weight: 500;
  color: #57534e;
}
.tabs button { height: 48px; padding: 0 21px; border-radius: 8px; }
.tabs button:first-child { padding-left: 20px; }
.tabs .on { background: #fff; color: #111; box-shadow: 0 2px 4px rgba(0, 0, 0, .1); }
.tabsep { width: 2px; height: 32px; margin: 0 5px; background: #e5e3e1; }
.topbar h1 { font-size: 28px; line-height: 34px; font-weight: 600; }
.actions { justify-self: end; display: flex; align-items: center; gap: 18px; font-size: 24px; }
.coins { display: flex; align-items: center; gap: 10px; height: 64px; padding: 0 16px; border: 2px solid #e5e5e5; border-radius: 12px; color: #525252; font-variant-numeric: tabular-nums; }
.tb { display: flex; align-items: center; gap: 24px; height: 56px; padding: 0 17px; border: 3px solid #e5e5e5; border-radius: 12px; font-weight: 500; }
.tb .s { margin: 0 2px 0 3px; }
.sq { width: 54px; padding: 0; justify-content: center; }

/* toolbar */
.toolbar { display: flex; gap: 14px; height: 122px; padding: 8px 17px 4px; border-bottom: 2px solid #e5e5e5; align-items: flex-start; }
.group { display: flex; gap: 4px; height: 108px; padding: 4px; border: 2px solid #e5e5e5; border-radius: 12px; }
.group button { display: flex; flex-direction: column; align-items: center; gap: 6px; min-width: 88px; height: 96px; padding: 14px 11px 8px; border-radius: 12px; font-weight: 500; color: #2f2f2f; }
.group .on { background: #fbeae9; color: #111; }
.group .more { min-width: 32px; width: 32px; padding: 38px 0 0; margin-left: -4px; }
.group:first-child { gap: 5px; }
.t { width: 40px; height: 40px; stroke-width: 3; overflow: visible; }
.off button { opacity: .4; }

/* main area */
.work { display: grid; grid-template-columns: 562px minmax(0, 1fr) 652px; min-height: 0; }
.panel { display: flex; flex-direction: column; min-height: 0; background: #fbfbfb; }
.sheets { border-right: 4px solid #e8e8e8; }
.takeoff { border-left: 4px solid #e8e8e8; }
.phead { display: flex; align-items: center; height: 66px; padding: 0 16px; background: #f9f7f4; border-bottom: 2px solid #e9e5e0; }
.phead .i { width: 28px; height: 28px; }
.phead h2 { margin-left: 8px; font-size: 24px; font-weight: 700; margin-right: auto; }
.phead button { display: flex; width: 48px; justify-content: center; }
.sheets .phead { padding-right: 12px; }
.sheets .phead > .i { color: #555; }
.takeoff .phead { padding: 0 12px 0 8px; font-size: 24px; }
.takeoff .phead h2 { margin-right: 12px; }
.bar { width: 2px; height: 28px; background: #555; margin-right: 11px; }
.phead a { color: #57534e; text-decoration: none; margin-right: auto; }
.find { padding: 14px 17px 12px 16px; border-bottom: 2px solid #e5e5e5; }
.field { display: flex; align-items: center; gap: 14px; height: 46px; padding: 0 10px; background: #fff; border: 2px solid #e5e5e5; border-radius: 10px; color: #525252; }
.field .i { width: 24px; height: 24px; }
.field input { flex: 1; min-width: 0; outline: 0; }
.field input::placeholder { color: #5f5f5f; opacity: 1; }
.field.big { height: 54px; gap: 10px; font-size: 24px; padding: 0 14px; border-radius: 12px; }

.tree { flex: 1; min-height: 0; overflow: hidden; padding-top: 12px; }
.fold { display: flex; align-items: center; gap: 10px; height: 48px; padding: 0 21px 0 22px; font-weight: 500; }
.fold b { margin-left: auto; font-size: 24px; color: #525252; }
.fold span { margin-left: -2px; }
.tree .kids { margin-left: 32px; border-left: 2px dotted #999; }
.tree .kids .fold { height: 47px; padding-left: 12px; }
.tree .kids .kids { margin-left: 22px; }
.kids li { position: relative; display: flex; align-items: center; gap: 4px; height: 36px; padding: 0 60px 0 54px; }
.kids li::before { content: ""; position: absolute; left: 2px; top: 25px; width: 18px; border-top: 2px dotted #aaa; }
.kids li span { margin-right: auto; }
.kids em { display: flex; align-items: center; gap: 4px; height: 32px; padding: 0 8px; border-radius: 8px; background: #fae5db; color: #dd5a17; font-size: 20px; font-weight: 600; }
.kids em.green { background: #d8eae0; color: #1f7a55; }
.kids .cur { padding-left: 12px; }
.kids .cur span { flex: 1; height: 32px; line-height: 32px; padding: 0 16px; margin: 0 0 0 2px; border-radius: 12px; background: #171717; color: #fff; font-weight: 600; white-space: nowrap; }
.kids .sub { display: block; height: auto; padding: 0; }
.kids .sub::before { content: none; }
.uses { margin-left: 34px; padding-bottom: 40px; border-left: 2px dotted #999; }
.kids .uses li { height: 40px; padding: 0 76px 0 49px; margin: 0 12px 0 -3px; gap: 0; font-size: 20px; border-bottom: 2px solid #e5e5e5; }
.kids .uses li:first-child { height: 37px; }
.kids .uses li::before { top: 19px; width: 6px; left: 6px; }
.uses span { margin-left: 12px; }
.uses b, .items .it b, .items .su b { font-size: 18px; font-variant-numeric: tabular-nums; }
.uses small { width: 76px; text-align: right; font-size: 18px; color: #5f5f5f; }
.uses i { margin-left: 21px; }

.lower { flex: 0 0 40%; border-top: 2px solid #e5e5e5; }
.lhead { padding: 10px 16px; height: 68px; background: #f9f7f4; border-bottom: 2px solid #e9e5e0; }
.seg { display: inline-flex; border: 2px solid #e5e5e5; border-radius: 8px; overflow: hidden; font-weight: 600; }
.seg button { height: 40px; padding: 0 16px; background: #fff; color: #525252; }
.seg .on { padding: 0 17px; background: #fafafa; color: #111; border-left: 2px solid #e5e5e5; }
.lower p { padding: 16px 24px; line-height: 31px; color: #57534e; }
.lower strong { font-weight: 600; }
kbd { display: inline-block; font: inherit; font-size: 20px; line-height: 24px; vertical-align: bottom; border: 2px solid #e5e5e5; border-radius: 8px; padding: 0 8px; }

/* drawing area */
.canvas { position: relative; display: flex; align-items: center; justify-content: center; background: #d1d1d1; min-width: 0; }
.plan { width: calc(100% - 96px); aspect-ratio: 1570 / 1048; stroke: none; stroke-linecap: butt; stroke-linejoin: miter; stroke-width: 1; box-shadow: 0 2px 6px rgba(0, 0, 0, .08); }
.ln { fill: none; stroke: #444; stroke-width: 1; }
.dim path { marker: url(#tk); stroke: #444; }
.dots path { fill: none; stroke: #111; stroke-width: 3; stroke-dasharray: 3 1; }
.wall path { fill: none; stroke: #1f3f42; }
.plan .tx { font: 6px "Liberation Sans", Arial, sans-serif; fill: #222; text-anchor: middle; }
.plan .rm { font-size: 5px; }
.tt { font: 11px "Liberation Sans", Arial, sans-serif; fill: #111; }
.tt .sm { font-size: 6px; }
.tt .no { font-size: 30px; }

.legend { position: absolute; left: 50px; bottom: 247px; width: 522px; background: rgba(255, 255, 255, .97); border-radius: 12px; box-shadow: 0 8px 24px rgba(0, 0, 0, .2); }
.legend header { display: flex; align-items: center; height: 48px; padding: 0 18px 0 15px; border-bottom: 2px solid #e8e8e8; }
.grip { width: 16px; height: 12px; stroke: none; }
.legend h3 { margin: 0 13px; font-size: 22px; font-weight: 600; }
.legend header span { color: #57534e; }
.legend header button { display: flex; margin-left: auto; padding-right: 1px; color: #555; }
.x { width: 16px; height: 16px; }
.lbody { padding: 15px 16px 16px 14px; }
.legend h4 { font-weight: 400; font-size: 22px; line-height: 36px; margin: 6px 0 2px; color: #57534e; }
.legend h4:first-child { margin-top: 0; }
.legend p { display: flex; align-items: center; height: 36px; }
.legend p:last-child { height: 35px; }
.legend i { width: 16px; height: 18px; margin-right: 14px; }
.legend i.pt { width: 20px; height: 20px; margin-right: 10px; }
.legend b { margin-left: auto; font-variant-numeric: tabular-nums; }
.legend u { width: 44px; margin-left: 10px; }
.corner { position: absolute; right: 0; bottom: 0; width: 16px; height: 16px; stroke: none; }

.handle { position: absolute; top: 707px; width: 24px; height: 126px; background: #fcfcfc; display: flex; align-items: center; justify-content: center; color: #444; box-shadow: 0 2px 6px rgba(0, 0, 0, .1); }
.lh { left: 0; border-radius: 0 10px 10px 0; }
.rh { right: 0; border-radius: 10px 0 0 10px; }
.float { position: absolute; bottom: 25px; display: flex; flex-direction: column; padding: 3px 0; align-items: center; background: #fdfdfd; border-radius: 14px; box-shadow: 0 4px 12px rgba(0, 0, 0, .15); color: #444; }
.float button, .float span { display: flex; align-items: center; justify-content: center; height: 48px; }
.float .i { stroke-width: 3; }
.nav { left: 24px; width: 56px; }
.zoom { right: 25px; width: 64px; font-size: 22px; }

/* takeoff list */
.bid { display: flex; align-items: center; gap: 9px; height: 66px; padding: 0 17px 0 16px; border-bottom: 2px solid #e5e5e5; }
.bid .i { width: 24px; height: 24px; color: #555; }
.sel { flex: 1; display: flex; align-items: center; height: 46px; padding-right: 13px; background: #fff; border: 2px solid #e5e5e5; border-radius: 8px; }
.sel select { flex: 1; height: 42px; padding: 0 12px; font-size: 24px; appearance: none; outline: 0; }
.sel .s { color: #555; }
.find2 { padding: 9px 14px 9px 12px; border-bottom: 2px solid #e5e5e5; }
.items li { display: flex; align-items: center; height: 40px; border-bottom: 2px solid #e8e6e3; font-size: 20px; background: #fafbfb; }
.items .g { height: 43px; padding-left: 18px; background: #fcf7f1; font-size: 22px; font-weight: 500; }
.items .l1 { padding-left: 42px; }
.items .l2 { padding-left: 66px; }
.items .g > .s { color: #444; margin-right: 11px; }
.items .f { margin-right: 8px; }
.items .g b { margin-left: 8px; height: 32px; min-width: 34px; padding: 0 8px; border: 2px solid #eae6e1; border-radius: 8px; font-size: 20px; text-align: center; color: #525252; }
.items .it { position: relative; padding: 0 76px 0 124px; }
.items .it::before, .items .thru::after { content: ""; position: absolute; left: 76px; top: 0; width: 8px; height: 21px; border-left: 2px dotted #999; border-bottom: 2px dotted #999; }
.items .thru::after { height: 38px; border-bottom: 0; }
.items .k { margin-right: 13px; }
.items .op { padding-left: 92px; }
.op > .s { width: 16px; height: 16px; margin-right: 16px; color: #666; }
.items .it span, .items .su span { margin-right: auto; }
.items small { width: 76px; text-align: right; font-size: 18px; color: #666; }
.items i { margin-left: 21px; }
.items .su { padding: 0 147px 0 160px; background: #faf9f7; }
.su .s { width: 16px; height: 16px; margin-right: 16px; color: #777; }

/* status bar */
.status { display: grid; grid-template-columns: 1fr auto 1fr; align-items: center; height: 56px; padding: 0 31px; border-top: 2px solid #e5e5e5; }
.toggles { grid-column: 2; display: flex; gap: 8px; }
.toggles button { height: 44px; padding: 0 16px; border: 2px solid #e5e5e5; border-radius: 10px; background: #f7f6f5; color: #44403c; font-weight: 500; }
.toggles .on { background: #fbe6db; border-color: #efa987; color: #d9530f; }
.scale { grid-column: 3; justify-self: end; height: 44px; padding: 0 20px; border-radius: 10px; background: #109868; color: #fff; font-weight: 600; }
```
